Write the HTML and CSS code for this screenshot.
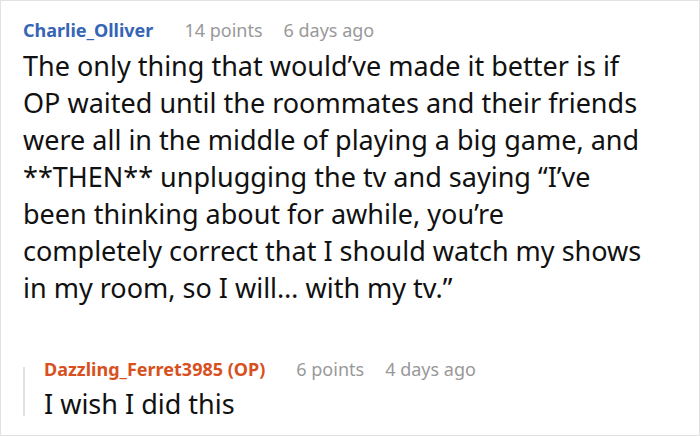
FILE: index.html
```html
<!DOCTYPE html>
<html>
<head>
<meta charset="utf-8">
<link rel="stylesheet" href="styles.css">
</head>
<body>
<div class="frame">
  <div class="comment">
    <div class="meta">
      <span class="user">Charlie_Olliver</span>
      <span class="info">14 points</span>
      <span class="info">6 days ago</span>
    </div>
    <p class="text">The only thing that would’ve made it better is if<br>OP waited until the roommates and their friends<br>were all in the middle of playing a big game, and<br>**THEN** unplugging the tv and saying “I’ve<br>been thinking about for awhile, you’re<br>completely correct that I should watch my shows<br>in my room, so I will… with my tv.”</p>
    <div class="reply">
      <div class="meta">
        <span class="user op">Dazzling_Ferret3985 (OP)</span>
        <span class="info">6 points</span>
        <span class="info">4 days ago</span>
      </div>
      <p class="text">I wish I did this</p>
    </div>
  </div>
</div>
</body>
</html>
```

FILE: styles.css
```css
html, body {
  margin: 0;
  padding: 0;
  background: #fff;
}
.frame {
  box-sizing: border-box;
  width: 700px;
  height: 436px;
  border: 1px solid #e2e2e2;
  font-family: "Noto Sans", sans-serif;
  color: #111;
}
.comment {
  padding: 17px 12px 0 22px;
}
.meta {
  display: flex;
  gap: 21px;
  font-size: 18px;
  line-height: 24px;
}
.user {
  font-weight: bold;
  color: #3565b4;
  margin-right: 10px;
}
.user.op {
  color: #d8501e;
}
.info {
  color: #999;
}
.text {
  margin: 0;
  font-size: 27px;
  line-height: 37px;
  padding-top: 5px;
}
.reply {
  position: relative;
  margin-top: 51px;
  padding-left: 21px;
}
.reply::before {
  content: "";
  position: absolute;
  left: 0;
  top: 10px;
  bottom: 6px;
  width: 2px;
  background: #e2e2e2;
}
.reply .text {
  padding-top: 4px;
}
```
